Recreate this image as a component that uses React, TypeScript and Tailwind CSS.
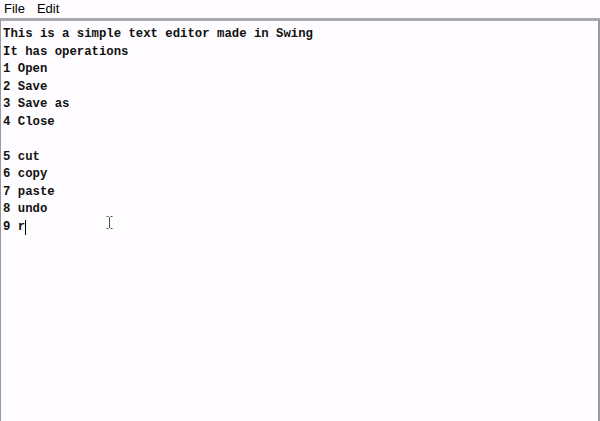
import React from 'react';

const lines = [
  'This is a simple text editor made in Swing',
  'It has operations',
  '1 Open',
  '2 Save',
  '3 Save as',
  '4 Close',
  '',
  '5 cut',
  '6 copy',
  '7 paste',
  '8 undo',
];

export default function App() {
  return (
    <div className="w-[600px] h-[421px] bg-[#fefcfe] flex flex-col overflow-hidden">
      <div className="h-[18px] flex items-center gap-[12px] px-[4px] text-[13px] text-black font-['Liberation_Sans',Arial,sans-serif]">
        <span>File</span>
        <span>Edit</span>
      </div>
      <div className="flex-1 relative border-t-[3px] border-t-[#a9a9ad] border-l border-l-[#9a9aa0] border-r-2 border-r-[#9a9aa0]">
        <div className="pt-[5px] pl-[2px] font-['Liberation_Mono','Courier_New',monospace] font-bold text-[12.3px] leading-[17.55px] text-[#111]">
          {lines.map((l, i) => (
            <div key={i} className="h-[17.55px] whitespace-pre">{l}</div>
          ))}
          <div className="h-[17.55px] whitespace-pre flex items-center">
            <span>9 r</span>
            <span className="w-px h-[15px] bg-black" />
          </div>
        </div>
        <svg className="absolute left-[105px] top-[195px]" width="7" height="13" viewBox="0 0 7 13">
          <path d="M0.5 0.5 H2.5 M4.5 0.5 H6.5 M3.5 1 V12 M0.5 12.5 H2.5 M4.5 12.5 H6.5" stroke="#555" strokeWidth="1" fill="none" />
        </svg>
      </div>
    </div>
  );
}
